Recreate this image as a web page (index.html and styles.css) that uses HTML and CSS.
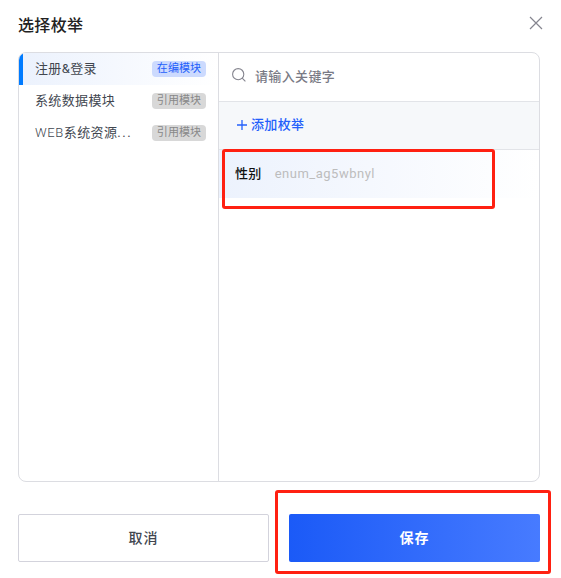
FILE: index.html
```
<!DOCTYPE html>
<html lang="zh-CN">
<head>
    <meta charset="UTF-8">
    <title>选择枚举</title>
    <link rel="stylesheet" href="styles.css">
</head>
<body>
    <div class="dialog">
        <div class="dialog-header">
            <div class="dialog-title">选择枚举</div>
            <svg class="close" width="14" height="14" viewBox="0 0 14 14"><path d="M1 1L13 13M13 1L1 13" /></svg>
        </div>
        <div class="panel">
            <div class="modules">
                <div class="module active">
                    <span class="module-name">注册&amp;登录</span>
                    <span class="tag">在编模块</span>
                </div>
                <div class="module">
                    <span class="module-name">系统数据模块</span>
                    <span class="tag">引用模块</span>
                </div>
                <div class="module">
                    <span class="module-name"><span class="latin">WEB</span>系统资源<span class="dots">...</span></span>
                    <span class="tag">引用模块</span>
                </div>
            </div>
            <div class="enums">
                <div class="search">
                    <svg class="search-icon" width="14" height="14" viewBox="0 0 14 14"><circle cx="6.2" cy="6.2" r="5.6" /><path d="M10.2 10.2L13.4 13.4" /></svg>
                    <span>请输入关键字</span>
                </div>
                <div class="add">
                    <svg class="add-icon" width="10" height="10" viewBox="0 0 10 10"><path d="M5 0V10M0 5H10" /></svg>
                    <span>添加枚举</span>
                </div>
                <div class="enum">
                    <span class="enum-name">性别</span>
                    <span class="enum-code">enum_ag5wbnyl</span>
                </div>
            </div>
        </div>
        <div class="dialog-footer">
            <div class="btn cancel" role="button" tabindex="0">取消</div>
            <div class="btn save" role="button" tabindex="0">保存</div>
        </div>
    </div>
    <div class="mark mark-enum"></div>
    <div class="mark mark-save"></div>
</body>
</html>
```
FILE: styles.css
```
body {
    margin: 0;
    background: #fff;
    font-family: Roboto, "Noto Sans CJK SC", sans-serif;
    font-size: 13px;
    letter-spacing: 0.35px;
    color: #41464f;
}

.dialog {
    box-sizing: border-box;
    width: 561px;
    height: 578px;
    padding: 0 21px 16px 18px;
    display: flex;
    flex-direction: column;
    overflow: hidden;
}

.dialog-header {
    display: flex;
    align-items: center;
    justify-content: space-between;
    height: 52px;
    box-sizing: border-box;
    padding-bottom: 4px;
}
.dialog-title {
    font-size: 16px;
    font-weight: 500;
    color: #222;
}
.close {
    margin: 0 -3px 2px 0;
    fill: none;
    stroke: #85858f;
    stroke-width: 1.2;
}

.panel {
    display: flex;
    box-sizing: border-box;
    height: 430px;
    border: 1px solid #dcdde2;
    border-radius: 8px;
    overflow: hidden;
}

.modules {
    width: 199px;
    border-right: 1px solid #dcdde2;
}
.module {
    display: flex;
    align-items: center;
    justify-content: space-between;
    height: 32px;
    padding: 0 12px 0 16px;
}
.module.active {
    padding-left: 12px;
    border-left: 4px solid #007bff;
    background: linear-gradient(to right, #ecf2fd, #fff);
}
.module-name {
    padding-bottom: 4px;
}
.latin {
    font-weight: 300;
    letter-spacing: 0.6px;
}
.dots {
    letter-spacing: 1.6px;
}
.tag {
    width: 54px;
    height: 16px;
    line-height: 16px;
    border-radius: 4px;
    background: #d8d8d8;
    color: #888;
    font-size: 11px;
    letter-spacing: 0.1px;
    text-align: center;
}
.module.active .tag {
    background: #ccdafe;
    color: #2460fa;
}

.enums {
    flex: 1;
}
.search,
.add,
.enum {
    display: flex;
    align-items: center;
    box-sizing: border-box;
    height: 48px;
}
.search {
    height: 49px;
    padding: 0 0 3px 13px;
    gap: 9px;
    border-bottom: 1px solid #e2e4e8;
    color: #797a85;
    font-weight: 500;
}
.search-icon {
    margin-bottom: 2px;
    fill: none;
    stroke: #85858f;
    stroke-width: 1.1;
}
.add {
    padding: 0 0 5px 18px;
    gap: 4px;
    border-bottom: 1px solid #e2e4e8;
    background: #f6f8fa;
    color: #2460fa;
    font-weight: 500;
}
.add-icon {
    margin-bottom: -3px;
    stroke: #2460fa;
    stroke-width: 1.3;
}
.enum {
    padding: 0 0 3px 16px;
    gap: 13px;
    background: linear-gradient(to right, #ecf2fd, #fff);
}
.enum-name {
    color: #111;
    font-weight: 500;
}
.enum-code {
    padding-top: 2px;
    color: #bdbdbd;
    letter-spacing: 0.5px;
}

.dialog-footer {
    display: flex;
    justify-content: space-between;
    margin-top: 32px;
}
.btn {
    width: 251px;
    box-sizing: border-box;
    height: 48px;
    line-height: 46px;
    border: 1px solid #d3d3dc;
    border-radius: 2px;
    font-size: 14px;
    letter-spacing: 1px;
    text-align: center;
}
.cancel {
    font-weight: 500;
}
.save {
    border: 0;
    line-height: 48px;
    background: linear-gradient(to right, #1b5af7, #477bff);
    color: #fff;
    font-weight: 700;
}

/* red callout frames over the dialog */
.mark {
    position: absolute;
    box-sizing: border-box;
    border: 3px solid #ff2011;
    border-radius: 3px;
}
.mark-enum {
    left: 222px;
    top: 149px;
    width: 273px;
    height: 60px;
}
.mark-save {
    left: 275px;
    top: 490px;
    width: 276px;
    height: 84px;
}
```
